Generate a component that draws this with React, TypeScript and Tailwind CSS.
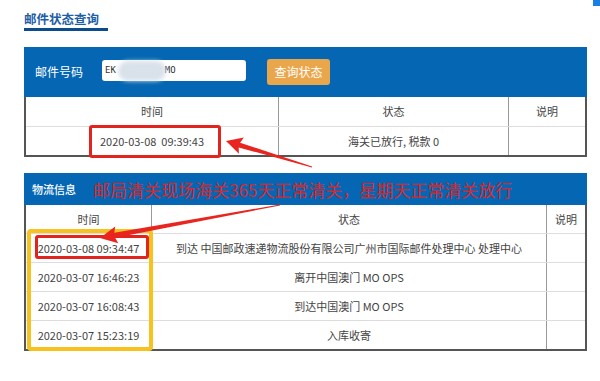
import React from "react";

function arrowPoints(tx: number, ty: number, hx: number, hy: number, tailW: number, shaftW: number, headW: number, headL: number) {
  const dx = hx - tx;
  const dy = hy - ty;
  const L = Math.sqrt(dx * dx + dy * dy);
  const ux = dx / L;
  const uy = dy / L;
  const nx = -uy;
  const ny = ux;
  const bx = hx - ux * headL;
  const by = hy - uy * headL;
  const p = (x: number, y: number) => `${x.toFixed(1)},${y.toFixed(1)}`;
  return [
    p(tx + (nx * tailW) / 2, ty + (ny * tailW) / 2),
    p(bx + (nx * shaftW) / 2, by + (ny * shaftW) / 2),
    p(bx + (nx * headW) / 2 - ux * 2, by + (ny * headW) / 2 - uy * 2),
    p(hx, hy),
    p(bx - (nx * headW) / 2 - ux * 2, by - (ny * headW) / 2 - uy * 2),
    p(bx - (nx * shaftW) / 2, by - (ny * shaftW) / 2),
    p(tx - (nx * tailW) / 2, ty - (ny * tailW) / 2),
  ].join(" ");
}

const rows2 = [
  { t: "2020-03-08 09:34:47", s: "到达 中国邮政速递物流股份有限公司广州市国际邮件处理中心 处理中心" },
  { t: "2020-03-07 16:46:23", s: "离开中国澳门 MO OPS" },
  { t: "2020-03-07 16:08:43", s: "到达中国澳门 MO OPS" },
  { t: "2020-03-07 15:23:19", s: "入库收寄" },
];

export default function App() {
  return (
    <div className="relative w-[600px] h-[381px] overflow-hidden bg-white font-['Noto_Sans_CJK_SC',sans-serif] text-[#444]">
      <div className="pl-[24px] pt-[11px] w-[587px]">
        <div className="text-[12.5px] leading-[16px] font-bold text-[#1d5ea6]">邮件状态查询</div>
        <div className="mt-[1px] h-[3px] w-[84px] bg-[#0b4c8c]" />

        <div className="mt-[16px] h-[50px] bg-[#0567b3] flex items-center pl-[11px]">
          <span className="text-[12px] text-white leading-none">邮件号码</span>
          <div className="ml-[19px] mb-[3px] w-[144px] h-[21px] bg-white rounded-[3px] flex items-center pl-[3px] text-[9px] text-[#333] font-['DejaVu_Sans_Mono',monospace]">
            <span>EK</span>
            <span className="ml-[2px] w-[48px] h-[20px] rounded-full bg-[#d9e1eb] blur-[2px]" />
            <span className="ml-[-1px]">MO</span>
          </div>
          <div className="ml-[21px] w-[63px] h-[26px] rounded-[3px] bg-[#eaa64b] flex items-center justify-center text-[12px] text-white">
            查询状态
          </div>
        </div>

        <div className="border-l-2 border-r-2 border-b-2 border-[#555] text-[11px]">
          <div className="flex h-[29px]">
            <div className="w-[253px] border-r border-[#999] flex items-center justify-center">时间</div>
            <div className="w-[230px] border-r border-[#999] flex items-center justify-center">状态</div>
            <div className="flex-1 flex items-center justify-center">说明</div>
          </div>
          <div className="flex h-[29px] border-t border-[#ddd]">
            <div className="w-[253px] border-r border-[#999] flex items-center justify-center">2020-03-08&nbsp;&nbsp;09:39:43</div>
            <div className="w-[230px] border-r border-[#999] flex items-center justify-center">海关已放行, 税款 0</div>
            <div className="flex-1" />
          </div>
        </div>

        <div className="mt-[16px] h-[32px] bg-[#0567b3] flex items-center pl-[8px]">
          <span className="text-[11px] text-white font-medium">物流信息</span>
          <span className="ml-[17px] text-[17px] leading-none text-[#d8282c]">邮局清关现场海关365天正常清关，星期天正常清关放行</span>
        </div>

        <div className="border-l-2 border-r-2 border-b-2 border-[#555] text-[11px]">
          <div className="flex h-[28px]">
            <div className="w-[126px] border-r border-[#999] flex items-center justify-center">时间</div>
            <div className="w-[395px] border-r border-[#999] flex items-center justify-center">状态</div>
            <div className="flex-1 flex items-center justify-center">说明</div>
          </div>
          {rows2.map((r) => (
            <div key={r.t} className="flex h-[29px] border-t border-[#ddd]">
              <div className="w-[126px] border-r border-[#999] flex items-center justify-center whitespace-nowrap">{r.t}</div>
              <div className="w-[395px] border-r border-[#999] flex items-center justify-center whitespace-nowrap">{r.s}</div>
              <div className="flex-1" />
            </div>
          ))}
        </div>
      </div>

      <div className="absolute right-0 top-0 w-[7px] h-[6px] bg-[#1a7fe0]" />

      <div className="absolute left-[89px] top-[125px] w-[132px] h-[33px] border-[3px] border-[#e3231d] rounded-[3px]" />
      <div className="absolute left-[27px] top-[229px] w-[126px] h-[122px] border-[4px] border-[#f7c11e] rounded-[4px]" />
      <div className="absolute left-[35px] top-[235px] w-[114px] h-[24px] border-[3px] border-[#e3231d] rounded-[3px]" />

      <svg className="absolute left-0 top-0" width="600" height="381" viewBox="0 0 600 381">
        <polygon points={arrowPoints(312, 167, 226, 141, 1, 5, 17, 14)} fill="#e8261f" />
        <polygon points={arrowPoints(280, 205, 100, 238, 1, 5, 17, 15)} fill="#e8261f" />
      </svg>
    </div>
  );
}
